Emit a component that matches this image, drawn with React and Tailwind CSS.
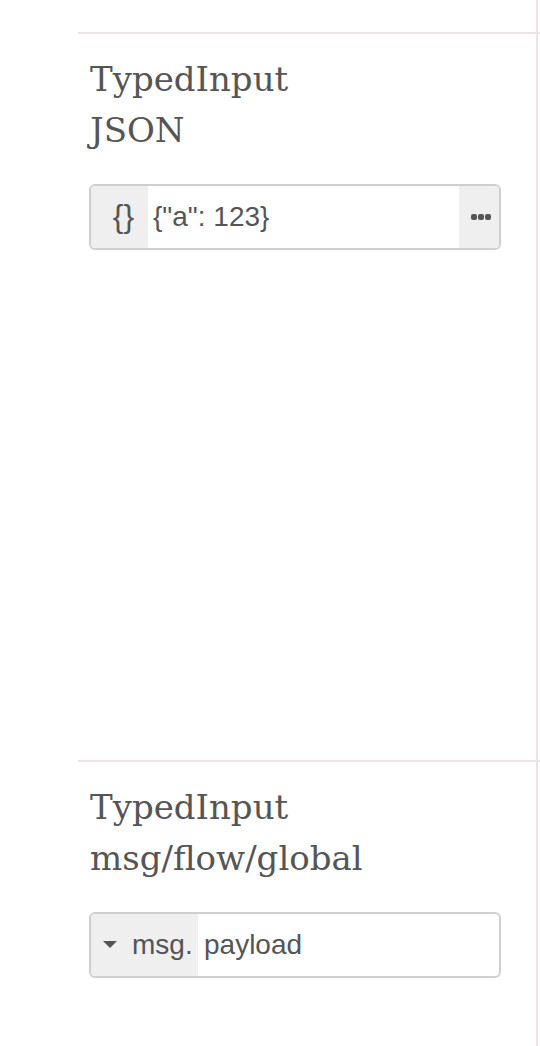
import React from "react";

const serif = { fontFamily: '"DejaVu Serif", "Liberation Serif", serif' };

function Row({ children, className = "" }) {
  return (
    <div className={"flex shrink-0 " + className}>
      <div className="w-[458px]">{children}</div>
      <div className="w-[2px] bg-[#efe1e6]" />
      <div className="flex-1" />
    </div>
  );
}

function Title({ lines }) {
  return (
    <div
      className="pl-[12px] text-[34px] leading-[51px] text-[#555]"
      style={serif}
    >
      {lines.map((l) => (
        <div key={l}>{l}</div>
      ))}
    </div>
  );
}

export default function App() {
  return (
    <div
      className="w-[540px] h-[1046px] bg-white flex overflow-hidden"
      style={{ fontFamily: '"Liberation Sans", Arial, sans-serif' }}
    >
      <div className="w-[78px] shrink-0" />
      <div className="flex-1 flex flex-col">
        <Row className="h-[32px]">
          <div />
        </Row>
        <div className="border-t-2 border-[#efe3e6] shrink-0">
          <Row className="h-[726px]">
            <div className="pt-[20px]">
              <Title lines={["TypedInput", "JSON"]} />
              <div className="mt-[28px] ml-[11px] w-[412px] h-[66px] border-2 border-[#cfcfcf] rounded-[6px] flex overflow-hidden text-[#555]">
                <div className="w-[57px] bg-[#efefef] flex items-center justify-center text-[32px] leading-none">
                  <span className="pl-[8px] pb-[2px]">{"{}"}</span>
                </div>
                <div className="flex-1 flex items-center pl-[5px] text-[28px]">
                  {'{"a": 123}'}
                </div>
                <div className="w-[40px] bg-[#efefef] flex items-center justify-center gap-[1px] pl-[4px]">
                  <span className="w-[6px] h-[6px] rounded-[2px] bg-[#555]" />
                  <span className="w-[6px] h-[6px] rounded-[2px] bg-[#555]" />
                  <span className="w-[6px] h-[6px] rounded-[2px] bg-[#555]" />
                </div>
              </div>
            </div>
          </Row>
        </div>
        <div className="border-t-2 border-[#efe3e6] flex-1 flex flex-col">
          <Row className="flex-1">
            <div className="pt-[20px]">
              <Title lines={["TypedInput", "msg/flow/global"]} />
              <div className="mt-[28px] ml-[11px] w-[412px] h-[66px] border-2 border-[#cfcfcf] rounded-[6px] flex overflow-hidden text-[#555]">
                <div className="w-[107px] bg-[#efefef] flex items-center pl-[12px] text-[28px]">
                  <svg width="14" height="8" viewBox="0 0 14 8" className="mr-[15px] shrink-0">
                    <path d="M0 0 L14 0 L7 7 Z" fill="#555" />
                  </svg>
                  <span>msg.</span>
                </div>
                <div className="flex-1 flex items-center pl-[6px] text-[28px]">
                  payload
                </div>
              </div>
            </div>
          </Row>
        </div>
      </div>
    </div>
  );
}
